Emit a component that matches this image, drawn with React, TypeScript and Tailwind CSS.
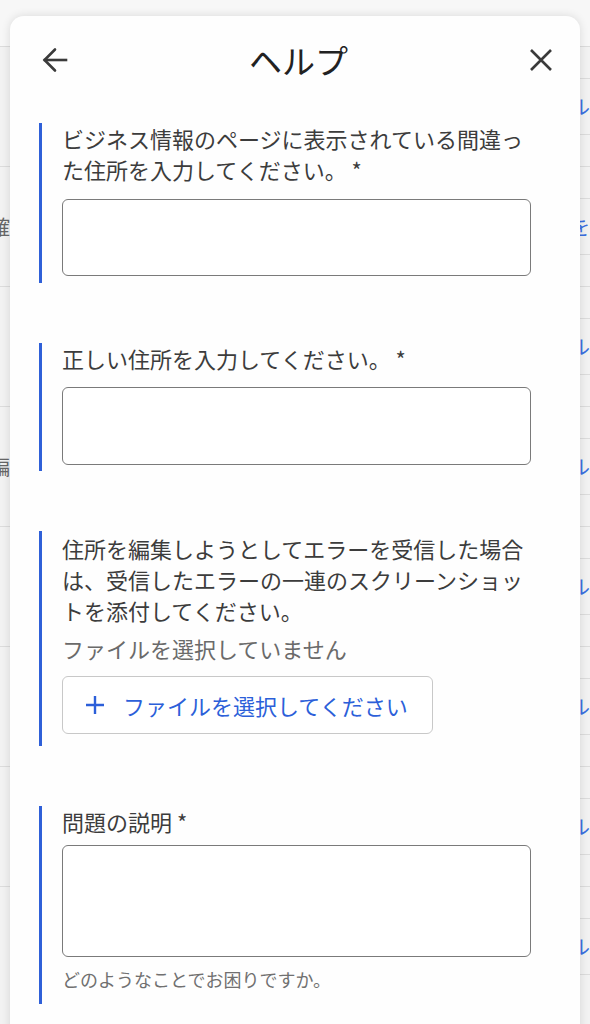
const FONT = "font-['Noto_Sans_CJK_JP','Noto_Sans',sans-serif]";

const ROWS = [
  { left: "", right: "ル" },
  { left: "確", right: "を" },
  { left: "", right: "ル" },
  { left: "編", right: "ル" },
  { left: "", right: "ル" },
  { left: "", right: "ル" },
  { left: "", right: "ル" },
  { left: "", right: "ル" },
];

function Backdrop() {
  return (
    <div className="flex flex-col">
      <div className="h-[46px] bg-[#f7f7f7]" />
      {ROWS.map((r, i) => (
        <div key={i} className="flex h-[120px] border-t border-[#dcdcdc] bg-[#f2f2f2]">
          <div className="flex w-[580px] items-center">
            <span className="-ml-[10px] text-[20px] text-[#666]">{r.left}</span>
          </div>
          <div className="flex flex-1 flex-col">
            <div className="h-[32px] border-b border-[#dcdcdc]" />
            <div className="flex h-[56px] items-center border-b border-[#dcdcdc] text-[20px] text-[#3b6fe0]">
              {r.right}
            </div>
            <div className="flex-1" />
          </div>
        </div>
      ))}
    </div>
  );
}

function Block({ children }: { children: React.ReactNode }) {
  return <div className="border-l-[3px] border-[#2f60d8] pl-[20px]">{children}</div>;
}

export default function App() {
  return (
    <div className={`relative h-[1024px] w-[590px] overflow-hidden bg-[#f2f2f2] ${FONT}`}>
      <Backdrop />

      <div className="absolute left-[10px] top-[16px] bottom-[-20px] w-[570px] rounded-t-[14px] bg-[#fefefe] shadow-[0_0_10px_rgba(0,0,0,0.12)]">
        {/* header */}
        <div className="flex h-[88px] items-center pl-[32px] pr-[27px]">
          <svg width="26" height="26" viewBox="0 0 26 26" fill="none" stroke="#3a3a3a" strokeWidth="2.6" strokeLinecap="square">
            <path d="M24 13H3" />
            <path d="M13 2.5L2.5 13L13 23.5" strokeLinecap="round" strokeLinejoin="miter" />
          </svg>
          <div className="flex-1 text-center text-[33px] leading-none text-[#222]">ヘルプ</div>
          <svg width="24" height="24" viewBox="0 0 24 24" fill="none" stroke="#3a3a3a" strokeWidth="2.6">
            <path d="M2 2L22 22M22 2L2 22" />
          </svg>
        </div>

        <div className="flex flex-col gap-[60px] pl-[29px] pr-[49px] pt-[19px]">
          <Block>
            <p className="text-[22px] leading-[31px] text-[#3c3c3c]">
              ビジネス情報のページに表示されている間違った住所を入力してください。 *
            </p>
            <div className="mt-[14px] h-[77px] rounded-[6px] border border-[#7a7a7a] bg-white" />
            <div className="h-[7px]" />
          </Block>

          <Block>
            <p className="text-[22px] leading-[31px] text-[#3c3c3c]">正しい住所を入力してください。 *</p>
            <div className="mt-[13px] h-[78px] rounded-[6px] border border-[#7a7a7a] bg-white" />
            <div className="h-[6px]" />
          </Block>

          <Block>
            <p className="pt-[2px] text-[22px] leading-[31px] text-[#3c3c3c]">
              住所を編集しようとしてエラーを受信した場合は、受信したエラーの一連のスクリーンショットを添付してください。
            </p>
            <p className="mt-[7px] text-[22px] leading-[31px] text-[#6a6a6a]">ファイルを選択していません</p>
            <div className="mt-[12px] flex h-[58px] w-[371px] items-center gap-[18px] rounded-[6px] border border-[#c8c8c8] bg-white pl-[22px]">
              <svg width="20" height="20" viewBox="0 0 20 20" fill="none" stroke="#2c5fd9" strokeWidth="2.4">
                <path d="M10 1V19M1 10H19" />
              </svg>
              <span className="text-[22px] leading-none text-[#2c5fd9]">ファイルを選択してください</span>
            </div>
            <div className="h-[12px]" />
          </Block>

          <Block>
            <p className="text-[22px] leading-[31px] text-[#3c3c3c]">問題の説明 *</p>
            <div className="mt-[8px] h-[112px] rounded-[6px] border border-[#7a7a7a] bg-white" />
            <p className="mt-[10px] text-[18px] leading-[24px] text-[#707070]">どのようなことでお困りですか。</p>
            <div className="h-[13px]" />
          </Block>
        </div>
      </div>
    </div>
  );
}
